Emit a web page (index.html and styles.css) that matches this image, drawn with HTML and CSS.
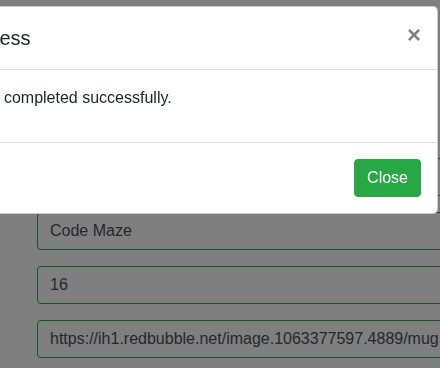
FILE: index.html
```html
<!DOCTYPE html>
<html lang="en">
<head>
  <meta charset="UTF-8" />
  <meta name="viewport" content="width=device-width, initial-scale=1.0"/>
  <title>Create Product</title>
  <link rel="stylesheet" href="styles.css">
</head>
<body>
  <main class="page">
    <form class="product-form">
      <div class="form-group">
        <input class="form-control is-valid" type="text" value="Mug" />
      </div>
      <div class="form-group">
        <input class="form-control is-valid" type="text" value="Code Maze" />
      </div>
      <div class="form-group">
        <input class="form-control is-valid" type="text" value="16" />
      </div>
      <div class="form-group">
        <input class="form-control is-valid" type="text" value="https://ih1.redbubble.net/image.1063377597.4889/mug,standard,x334,right-pad,600x600,f8f8f8.jpg" />
      </div>
    </form>
  </main>

  <div class="modal-backdrop"></div>

  <div class="modal">
    <div class="modal-dialog">
      <div class="modal-content">
        <div class="modal-header">
          <h5 class="modal-title">Success</h5>
          <button type="button" class="close">&times;</button>
        </div>
        <div class="modal-body">
          <p>Action completed successfully.</p>
        </div>
        <div class="modal-footer">
          <button type="button" class="btn btn-success">Close</button>
        </div>
      </div>
    </div>
  </div>
</body>
</html>
```

FILE: styles.css
```css
* {
  margin: 0;
  padding: 0;
  box-sizing: border-box;
}
html, body {
  overflow: hidden;
  height: 100%;
}
body {
  font-family: "Liberation Sans", Arial, sans-serif;
  font-size: 16px;
  line-height: 1.5;
  color: #212529;
  background: #fff;
}

/* page behind the dialog */
.page {
  width: 900px;
  padding: 158px 0 0 37px;
}
.form-group {
  margin-bottom: 16px;
}
.form-control {
  display: block;
  width: 100%;
  height: 38px;
  padding: 6px 12px;
  font-family: inherit;
  font-size: 16px;
  color: #495057;
  background: #fff;
  border: 1px solid #ced4da;
  border-radius: 4px;
}
.form-control.is-valid {
  border-color: #28a745;
}

/* modal */
.modal-backdrop {
  position: fixed;
  inset: 0;
  background: #000;
  opacity: 0.5;
}
.modal {
  position: fixed;
  inset: 0;
}
.modal-dialog {
  width: 500px;
  margin: 6px 0 0 -62px;
}
.modal-content {
  background: #fff;
  border: 1px solid rgba(0, 0, 0, 0.2);
  border-radius: 5px;
}
.modal-header {
  display: flex;
  align-items: flex-start;
  justify-content: space-between;
  padding: 16px;
  border-bottom: 1px solid #dee2e6;
}
.modal-title {
  font-size: 20px;
  font-weight: 500;
  line-height: 1.5;
}
.close {
  padding: 16px;
  margin: -16px -16px -16px auto;
  background: transparent;
  border: 0;
  font-family: inherit;
  font-size: 24px;
  font-weight: 700;
  line-height: 1;
  color: #000;
  opacity: 0.5;
  text-shadow: 0 1px 0 #fff;
}
.modal-body {
  padding: 16px;
}
.modal-body p {
  margin-bottom: 16px;
}
.modal-footer {
  display: flex;
  justify-content: flex-end;
  padding: 16px;
  border-top: 1px solid #dee2e6;
}
.btn {
  padding: 6px 12px;
  font-family: inherit;
  font-size: 16px;
  line-height: 1.5;
  border: 1px solid transparent;
  border-radius: 4px;
}
.btn-success {
  color: #fff;
  background: #28a745;
  border-color: #28a745;
}
```
